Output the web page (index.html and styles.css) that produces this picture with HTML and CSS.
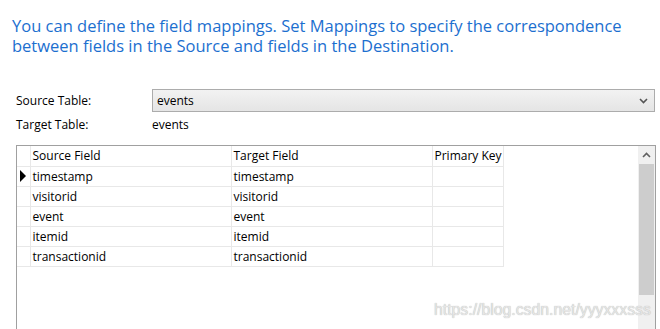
FILE: index.html
```html
<!DOCTYPE html>
<html lang="en">
<head>
    <meta charset="UTF-8">
    <title>Field Mappings</title>
    <link rel="stylesheet" href="styles.css">
</head>
<body>
    <p class="intro">You can define the field mappings. Set Mappings to specify the correspondence between fields in the Source and fields in the Destination.</p>
    <div class="tables">
        <span class="label">Source Table:</span>
        <div class="combo">
            <span>events</span>
            <svg class="chevron" width="9" height="6" viewBox="0 0 9 6"><path d="M1 1l3.5 3.5L8 1" fill="none" stroke="#555" stroke-width="1.6"/></svg>
        </div>
        <span class="label">Target Table:</span>
        <span class="value">events</span>
    </div>
    <div class="grid">
        <table class="mappings">
            <tr>
                <th class="rowhead"></th>
                <th class="col">Source Field</th>
                <th class="col">Target Field</th>
                <th class="key">Primary Key</th>
            </tr>
            <tr>
                <td class="rowhead current"><span class="arrow"></span></td>
                <td>timestamp</td>
                <td>timestamp</td>
                <td></td>
            </tr>
            <tr>
                <td class="rowhead"></td>
                <td>visitorid</td>
                <td>visitorid</td>
                <td></td>
            </tr>
            <tr>
                <td class="rowhead"></td>
                <td>event</td>
                <td>event</td>
                <td></td>
            </tr>
            <tr>
                <td class="rowhead"></td>
                <td>itemid</td>
                <td>itemid</td>
                <td></td>
            </tr>
            <tr>
                <td class="rowhead"></td>
                <td>transactionid</td>
                <td>transactionid</td>
                <td></td>
            </tr>
        </table>
        <div class="scrollbar">
            <div class="scroll-up">
                <svg width="9" height="6" viewBox="0 0 9 6"><path d="M1 5l3.5-3.5L8 5" fill="none" stroke="#606060" stroke-width="1.6"/></svg>
            </div>
            <div class="thumb"></div>
        </div>
    </div>
    <div class="watermark">https://blog.csdn.net/yyyxxxsss</div>
</body>
</html>
```

FILE: styles.css
```css
body {
    margin: 0;
    width: 660px;
    height: 329px;
    overflow: hidden;
    position: relative;
    background-color: #ffffff;
    font-family: 'Open Sans', 'Noto Sans', sans-serif;
    font-size: 12px;
    color: #000;
}
.intro {
    margin: 16px 0 0 12px;
    width: 640px;
    font-size: 16.5px;
    line-height: 20px;
    color: #1c6fcf;
}
.tables {
    display: grid;
    grid-template-columns: 136px 503px;
    grid-template-rows: 23px 24px;
    align-items: center;
    margin: 33px 0 0 16px;
}
.combo {
    box-sizing: border-box;
    height: 23px;
    border: 1px solid #acacac;
    background: linear-gradient(#f2f2f2, #e5e5e5);
    display: flex;
    align-items: center;
    justify-content: space-between;
    padding: 0 6px 0 4px;
}
.grid {
    display: flex;
    justify-content: space-between;
    box-sizing: border-box;
    width: 640px;
    height: 200px;
    margin: 9px 0 0 16px;
    border: 1px solid #a0a0a0;
}
.mappings {
    border-collapse: collapse;
    table-layout: fixed;
    width: 485px;
    align-self: flex-start;
}
.mappings th, .mappings td {
    box-sizing: border-box;
    height: 20px;
    padding: 1px 0 0 2px;
    border-right: 1px solid #e8e8e8;
    border-bottom: 1px solid #e8e8e8;
    font-weight: normal;
    text-align: left;
    white-space: nowrap;
    overflow: hidden;
    line-height: 18px;
}
.mappings .rowhead {
    width: 13px;
    padding: 0;
}
.mappings .col {
    width: 201px;
}
.mappings .key {
    width: 71px;
}
.arrow {
    display: block;
    width: 0;
    height: 0;
    margin-left: 3px;
    border-top: 6px solid transparent;
    border-bottom: 6px solid transparent;
    border-left: 6px solid #000;
}
.scrollbar {
    width: 17px;
    background-color: #f0f0f0;
    display: flex;
    flex-direction: column;
}
.scroll-up {
    height: 18px;
    display: flex;
    align-items: center;
    justify-content: center;
}
.thumb {
    height: 131px;
    margin: 0 1px;
    background-color: #cdcdcd;
}
.watermark {
    position: absolute;
    left: 434px;
    top: 301px;
    font-family: 'Liberation Sans', sans-serif;
    font-size: 15.8px;
    color: #e6e6e6;
    text-shadow: 0 0 1px #a8a8a8;
}
```
